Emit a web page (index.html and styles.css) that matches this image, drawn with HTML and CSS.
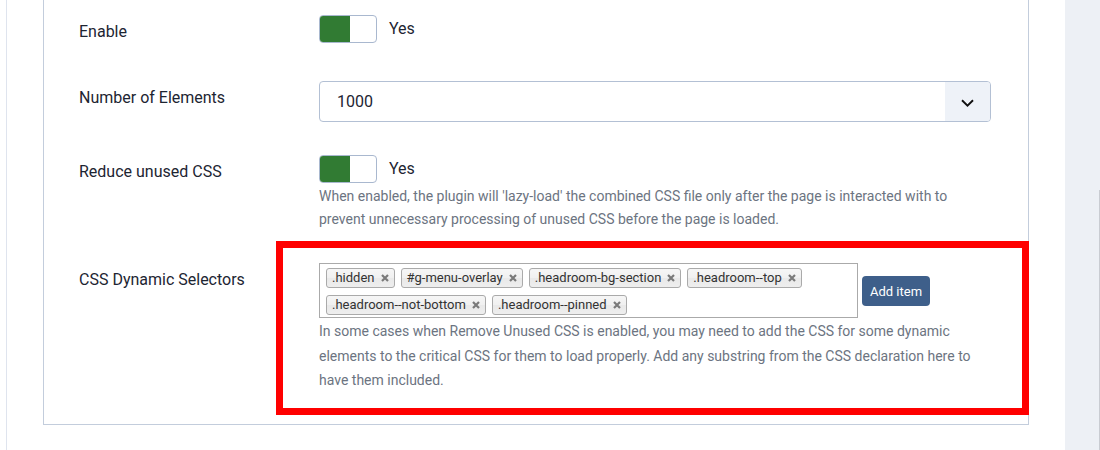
FILE: index.html
```html
<!DOCTYPE html>
<html lang="en">
<head>
<meta charset="utf-8">
<title>Plugin options</title>
<link rel="stylesheet" href="styles.css">
</head>
<body>
<div class="page">
  <div class="main">
    <div class="card">
      <div class="row">
        <div class="label">Enable</div>
        <div class="control">
          <div class="switch-line">
            <span class="switch"><span class="switch-on"></span></span>
            <span class="yes">Yes</span>
          </div>
        </div>
      </div>

      <div class="row row-select">
        <div class="label">Number of Elements</div>
        <div class="control">
          <div class="select">
            <span class="select-value">1000</span>
            <span class="select-arrow">
              <svg width="13" height="8" viewBox="0 0 13 8"><path d="M1 1.2 L6.5 6.6 L12 1.2" fill="none" stroke="#111" stroke-width="1.9"/></svg>
            </span>
          </div>
        </div>
      </div>

      <div class="row row-gap">
        <div class="label">Reduce unused CSS</div>
        <div class="control">
          <div class="switch-line">
            <span class="switch"><span class="switch-on"></span></span>
            <span class="yes">Yes</span>
          </div>
          <div class="desc desc-a">When enabled, the plugin will 'lazy-load' the combined CSS file only after the page is interacted with to prevent unnecessary processing of unused CSS before the page is loaded.</div>
        </div>
      </div>

      <div class="row row-gap2">
        <div class="label">CSS Dynamic Selectors</div>
        <div class="control">
          <div class="tags-line">
            <div class="tags">
              <span class="tag">.hidden<span class="x"><svg width="8" height="8" viewBox="0 0 8 8"><path d="M1 1 L7 7 M7 1 L1 7" stroke="#7a7a7a" stroke-width="2.2"/></svg></span></span>
              <span class="tag">#g-menu-overlay<span class="x"><svg width="8" height="8" viewBox="0 0 8 8"><path d="M1 1 L7 7 M7 1 L1 7" stroke="#7a7a7a" stroke-width="2.2"/></svg></span></span>
              <span class="tag">.headroom-bg-section<span class="x"><svg width="8" height="8" viewBox="0 0 8 8"><path d="M1 1 L7 7 M7 1 L1 7" stroke="#7a7a7a" stroke-width="2.2"/></svg></span></span>
              <span class="tag">.headroom--top<span class="x"><svg width="8" height="8" viewBox="0 0 8 8"><path d="M1 1 L7 7 M7 1 L1 7" stroke="#7a7a7a" stroke-width="2.2"/></svg></span></span>
              <span class="tag">.headroom--not-bottom<span class="x"><svg width="8" height="8" viewBox="0 0 8 8"><path d="M1 1 L7 7 M7 1 L1 7" stroke="#7a7a7a" stroke-width="2.2"/></svg></span></span>
              <span class="tag">.headroom--pinned<span class="x"><svg width="8" height="8" viewBox="0 0 8 8"><path d="M1 1 L7 7 M7 1 L1 7" stroke="#7a7a7a" stroke-width="2.2"/></svg></span></span>
            </div>
            <button class="add-btn" type="button">Add item</button>
          </div>
          <div class="desc desc-b">In some cases when Remove Unused CSS is enabled, you may need to add the CSS for some dynamic elements to the critical CSS for them to load properly. Add any substring from the CSS declaration here to have them included.</div>
        </div>
      </div>

      <div class="highlight"></div>
    </div>
  </div>
  <div class="rail"><div class="rail-edge"></div></div>
</div>
</body>
</html>
```
FILE: styles.css
```css
html, body {
  margin: 0;
  padding: 0;
  background: #fff;
}
body {
  font-family: Roboto, "Liberation Sans", sans-serif;
  color: #1f2733;
  overflow: hidden;
}
.page {
  display: flex;
  height: 450px;
  padding-left: 6px;
  box-sizing: border-box;
}
.main {
  flex: 1;
  border-left: 1px solid #dfe4ee;
  background: #fff;
}
.rail {
  width: 35px;
  background: #edf0f5;
  display: flex;
  flex-direction: column;
}
.rail-edge {
  margin-top: 190px;
  flex: 1;
  border-right: 1px solid #c9ccd2;
}
.card {
  position: relative;
  margin-left: 36px;
  width: 986px;
  box-sizing: border-box;
  border: 1px solid #c3cddc;
  border-top: none;
  padding: 15px 36px 31px 35px;
}
.row {
  display: grid;
  grid-template-columns: 240px 672px;
}
.row-select {
  margin-top: 37px;
}
.row-gap {
  margin-top: 33px;
}
.row-gap2 {
  margin-top: 32px;
}
.label {
  font-size: 16px;
  line-height: 24px;
  padding-top: 5px;
  color: #1d2532;
}
.switch-line {
  display: flex;
  align-items: flex-start;
}
.switch {
  display: block;
  width: 58px;
  height: 28px;
  box-sizing: border-box;
  border: 1px solid #a9b8cf;
  border-radius: 4px;
  overflow: hidden;
  background: #fff;
}
.switch-on {
  display: block;
  width: 30px;
  height: 100%;
  background: #317b33;
}
.yes {
  margin-left: 12px;
  margin-top: 2px;
  font-size: 16px;
  line-height: 24px;
  color: #1d2532;
}
.select {
  display: flex;
  align-items: center;
  height: 41px;
  box-sizing: border-box;
  border: 1px solid #b3c0d4;
  border-radius: 4px;
  overflow: hidden;
}
.select-value {
  flex: 1;
  padding-left: 17px;
  font-size: 16px;
  color: #1d2532;
}
.select-arrow {
  width: 45px;
  align-self: stretch;
  background: #eef2f8;
  display: flex;
  align-items: center;
  justify-content: center;
}
.select-arrow svg {
  display: block;
  margin-top: 2px;
}
.desc {
  font-size: 14px;
  color: #6c7481;
}
.desc-a {
  margin-top: 2px;
  line-height: 23px;
}
.desc-b {
  margin-top: 1px;
  line-height: 24.5px;
}
.tags-line {
  display: flex;
  align-items: center;
}
.tags {
  width: 539px;
  height: 55px;
  box-sizing: border-box;
  border: 1px solid #aaa;
  padding: 4px 5px 3px 6px;
  display: flex;
  flex-wrap: wrap;
  align-content: flex-start;
  gap: 7px 6px;
}
.tag {
  display: inline-flex;
  align-items: center;
  height: 20px;
  box-sizing: border-box;
  padding: 0 5px 0 5px;
  border: 1px solid #aaa;
  border-radius: 3px;
  background: linear-gradient(#f6f6f6 0%, #f0f0f0 50%, #e9e9e9 52%, #eeeeee 100%);
  font-size: 13px;
  line-height: 18px;
  color: #333;
}
.x {
  display: inline-flex;
  margin-left: 6px;
}
.x svg {
  display: block;
}
.add-btn {
  margin-left: 4px;
  margin-top: 1px;
  height: 30px;
  padding: 0 8px;
  border: none;
  border-radius: 4px;
  background: #3e5f8a;
  color: #fff;
  font-family: Roboto, "Liberation Sans", sans-serif;
  font-size: 13px;
}
.highlight {
  position: absolute;
  left: 232px;
  top: 241px;
  width: 753px;
  height: 174px;
  box-sizing: border-box;
  border: 7px solid #ff0000;
  pointer-events: none;
}
```
